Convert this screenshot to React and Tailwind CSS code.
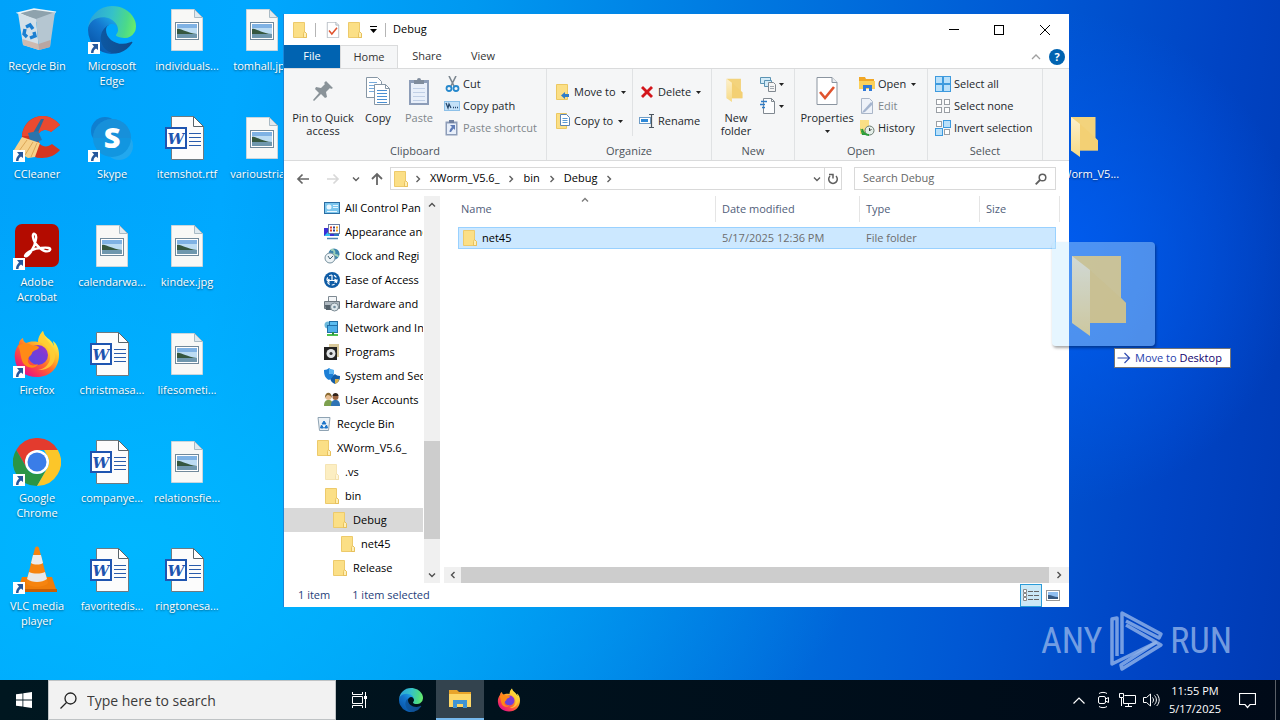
import { useState } from "react";

/* ---------- desktop icons ---------- */

function EdgeIcon({ className }) {
  return (
    <svg viewBox="4.6 4.9 256 256" className={className} aria-hidden="true">
      <defs>
        <linearGradient id="edge-a" x1="63" y1="180" x2="241" y2="180" gradientUnits="userSpaceOnUse">
          <stop offset="0" stopColor="#0c59a4" />
          <stop offset="1" stopColor="#114a8b" />
        </linearGradient>
        <linearGradient id="edge-b" x1="150" y1="100" x2="46" y2="215" gradientUnits="userSpaceOnUse">
          <stop offset="0" stopColor="#1b9de2" />
          <stop offset="0.4" stopColor="#1476ce" />
          <stop offset="1" stopColor="#0a5cb0" />
        </linearGradient>
        <linearGradient id="edge-c" x1="20" y1="60" x2="255" y2="110" gradientUnits="userSpaceOnUse">
          <stop offset="0" stopColor="#2ba6d8" />
          <stop offset="0.45" stopColor="#35c1c9" />
          <stop offset="0.8" stopColor="#4bd98a" />
          <stop offset="1" stopColor="#66eb6e" />
        </linearGradient>
      </defs>
      <path fill="url(#edge-a)" d="M235.7 195.5a93.7 93.7 0 0 1-10.6 4.7 101.9 101.9 0 0 1-35.9 6.4c-47.3 0-88.5-32.5-88.5-74.3a31.5 31.5 0 0 1 16.4-27.3c-42.8 1.8-53.8 46.4-53.8 72.5 0 73.9 68.1 81.4 82.8 81.4 7.9 0 19.8-2.3 27-4.6l1.3-.4a128.3 128.3 0 0 0 66.6-52.8 4 4 0 0 0-5.3-5.6Z" />
      <path fill="url(#edge-b)" d="M110.3 246.3A79.2 79.2 0 0 1 87.6 225a80.7 80.7 0 0 1 29.5-120c3.1-1.5 8.5-4.1 15.6-4a32.4 32.4 0 0 1 25.7 13 31.9 31.9 0 0 1 6.3 18.7c0-.2 24.5-79.6-80-79.6-43.9 0-80 41.6-80 78.2a130.2 130.2 0 0 0 12.1 56 128 128 0 0 0 156.4 67.1 75.6 75.6 0 0 1-62.9-8.1Z" />
      <path fill="url(#edge-c)" d="M156.9 153.8c-.8 1-3.3 2.5-3.3 5.6 0 2.6 1.7 5.1 4.8 7.3 14.3 10 41.4 8.6 41.5 8.6a59.6 59.6 0 0 0 30.3-8.3 61.4 61.4 0 0 0 30.4-52.9c.3-22.4-8-37.3-11.3-43.9C228.1 28.8 182.4 4.9 132.6 4.9a128 128 0 0 0-128 126.2c.5-36.5 36.8-66 80-66 3.5 0 23.5.3 42 10 16.3 8.6 24.9 19 30.8 29.2 6.2 10.7 7.3 24.2 7.3 29.5s-2.7 13.4-7.8 20Z" />
    </svg>
  );
}

function FirefoxIcon({ className }) {
  return (
    <svg viewBox="0 0 48 48" className={className} aria-hidden="true">
      <defs>
        <linearGradient id="fx-a" x1="40" y1="5" x2="10" y2="42" gradientUnits="userSpaceOnUse">
          <stop offset="0.05" stopColor="#fff44f" />
          <stop offset="0.35" stopColor="#ffba2a" />
          <stop offset="0.6" stopColor="#ff6a2e" />
          <stop offset="0.85" stopColor="#f6315c" />
          <stop offset="1" stopColor="#e31587" />
        </linearGradient>
        <linearGradient id="fx-b" x1="17" y1="32" x2="33" y2="14" gradientUnits="userSpaceOnUse">
          <stop offset="0" stopColor="#5b48e0" />
          <stop offset="0.6" stopColor="#7c3ad6" />
          <stop offset="1" stopColor="#a832c4" />
        </linearGradient>
      </defs>
      <path fill="url(#fx-a)" d="M30 1c-4 4-5 8-5 11-6-1-9 0-12 1-2-1-3-3-3-5-4 2-4 5-4 6-3 4-5 9-4 15 1 11 10 18 22 18 13 0 22-9 22-22 0-6-2-11-6-14 0 2 1 3 1 5-3-8-10-8-11-15Z" />
      <path fill="#ffcf35" d="M30 1c-4 4-4 8-4 11 9 3 12 9 11 17-1 6-6 10-12 11 9 1 17-5 17-14 0-11-11-15-12-25Z" opacity="0.85" />
      <circle cx="25" cy="25" r="10" fill="url(#fx-b)" />
      <path fill="#ff8a16" d="M5 16c5-4 9-3 13-1 2 1 6 0 8 2 0 3-6 3-7 6 0 2-3 3-4 6-1 6 5 8 10 5-2 5-11 5-15-1C7 27 8 21 5 16Z" />
    </svg>
  );
}

function ChromeIcon() {
  return (
    <svg viewBox="0 0 48 48" className="size-12" aria-hidden="true">
      <path fill="#e33b2e" d="M3.2 12A24 24 0 0 1 44.8 12H24a12 12 0 0 0-10.4 6Z" />
      <path fill="#e33b2e" d="M3.2 12 13.6 30 24 24V12Z" />
      <path fill="#2a9546" d="M3.2 12a24 24 0 0 0 20.8 36l10.4-18a12 12 0 0 1-20.8 0Z" />
      <path fill="#fcc629" d="M44.8 12A24 24 0 0 1 24 48l10.4-18A12 12 0 0 0 34.4 18L31 12Z" />
      <circle cx="24" cy="24" r="12" fill="#fff" />
      <circle cx="24" cy="24" r="9.5" fill="#3a7de8" />
    </svg>
  );
}

function RecycleBinIcon() {
  return (
    <svg viewBox="0 0 48 48" className="size-12" aria-hidden="true">
      <path d="M5 7 21 3l21 3-4 6-15 3Z" fill="#8ea2ad" stroke="#eef5f8" strokeWidth="1.5" />
      <path d="M5 7l18 6 3 31-16-5Z" fill="#d3e0e8" />
      <path d="M23 13l19-7-5 35-11 3Z" fill="#b5c6d1" />
      <path d="M9.500 33l16 5 .5 6-16-5Z" fill="#cdbab0" />
      <path d="M25.500 38l12-4-.5 7-11 3Z" fill="#b9a6a2" />
      <path d="M13 21l4-2 3 4M21 26l1 4-5 2M14 31l-3-3 1-5" fill="none" stroke="#1b7fd1" strokeWidth="3.400" />
    </svg>
  );
}

function CCleanerIcon() {
  return (
    <svg viewBox="0 0 48 48" className="size-12" aria-hidden="true">
      <path d="M47 11 38 18c-5-4-13-2-13 6s8 11 14 6l8 6c-4 5-11 8-18 8C16 44 9 36 9 24S17 2 30 2c7 0 13 4 17 9Z" fill="#d5351f" />
      <path d="M47 11 38 18c-5-4-12-2-13 4L9 22C10 10 19 2 30 2c7 0 13 4 17 9Z" fill="#ea4a30" />
      <path d="M31 5 24 21l-4-2 8-14Z" fill="#2c699c" />
      <path d="M15 19l10-2 4 9-11 4Z" fill="#2b74ad" />
      <path d="M9 23l18 6-5 14-7 1-14-8Z" fill="#f6d18b" />
      <path d="M14 26 6 37M20 28l-8 13M24 29l-6 14" stroke="#dba757" strokeWidth="1" />
    </svg>
  );
}

function SkypeIcon() {
  return (
    <svg viewBox="0 0 48 48" className="size-12" aria-hidden="true">
      <circle cx="17" cy="17" r="14" fill="#0f7fd0" />
      <circle cx="31" cy="32" r="14" fill="#22a8ee" />
      <circle cx="24" cy="24" r="19" fill="#1296e0" />
      <path d="M5 24a19 19 0 0 1 38 0Z" fill="#1a8cd6" opacity="0.6" />
      <text x="24" y="34" textAnchor="middle" fontFamily="Open Sans, sans-serif" fontSize="29" fontWeight="800" fill="#fff">S</text>
    </svg>
  );
}

function AcrobatIcon() {
  return (
    <svg viewBox="0 0 48 48" className="size-12" aria-hidden="true">
      <rect x="2" y="2" width="44" height="43" rx="7" fill="#b30b00" />
      <path
        d="M12 34c3 2 10-9 11-17 1-6-4-7-3-2 1 8 11 16 16 14 4-3-2-4-8-3-6 0-15 4-16 8Z"
        fill="none"
        stroke="#fff"
        strokeWidth="2.4"
        strokeLinejoin="round"
      />
    </svg>
  );
}

function VlcIcon() {
  return (
    <svg viewBox="0 0 48 48" className="size-12" aria-hidden="true">
      <path d="M9 31h30l5 15H4Z" fill="#ef7d0a" />
      <path d="M4 43h40v3H4Z" fill="#c85f04" />
      <path d="M22 2c1-2 3-2 4 0l9 35c-4 5-18 5-22 0Z" fill="#f6840f" />
      <path d="M20 9h8l2 8c-3 2-9 2-12 0Z" fill="#ececec" />
      <path d="M16 26c5 2 11 2 16 0l2 7c-5 4-15 4-20 0Z" fill="#e8e8e8" />
    </svg>
  );
}

function ImageFileIcon() {
  return (
    <svg viewBox="0 0 48 48" className="size-12" aria-hidden="true">
      <path d="M8.5 3.5h23l8 8v33h-31Z" fill="#f8f8f6" stroke="#c9d6dd" />
      <path d="M31.5 3.5v8h8Z" fill="#dfe9ef" stroke="#a9bac4" />
      <rect x="12.5" y="16.5" width="23" height="17" fill="#fff" stroke="#71899b" />
      <rect x="14" y="18" width="20" height="14" fill="#bcdcf3" />
      <path d="M14 18h20v4H14Z" fill="#7fb2e4" />
      <path d="M14 23c4-1 9 4 20 5v1H14Z" fill="#35573f" />
      <path d="M14 28h20v4H14Z" fill="#6f97ad" />
    </svg>
  );
}

function WordFileIcon() {
  return (
    <svg viewBox="0 0 48 48" className="size-12" aria-hidden="true">
      <path d="M8.5 2.500h22l10 10v33h-32Z" fill="#fcfcfc" stroke="#6f7a80" />
      <path d="M30.5 2.500v10h10Z" fill="#fff" stroke="#59646b" />
      <path d="M26 19.500h12M26 23.500h12M26 27.500h12M26 31.500h12" stroke="#2a5cab" strokeWidth="1.2" />
      <rect x="2" y="13" width="22" height="22" fill="#1f55b0" />
      <rect x="4" y="15" width="18" height="18" fill="#fff" />
      <text x="13" y="30" textAnchor="middle" fontFamily="DejaVu Serif, serif" fontSize="15" fontWeight="700" fontStyle="italic" fill="#1f55b0">W</text>
    </svg>
  );
}

function OpenFolderIcon({ className }) {
  return (
    <svg viewBox="0 0 96 96" className={className} aria-hidden="true">
      <defs>
        <linearGradient id="folder-front" x1="0" y1="0" x2="0" y2="1">
          <stop offset="0" stopColor="#fdf0cb" />
          <stop offset="1" stopColor="#f7da85" />
        </linearGradient>
      </defs>
      <path d="M16 6h49v42l5 5v20H16Z" fill="#f3d37c" />
      <path d="M65 48l5 5v20H34V20Z" fill="#f2cf70" opacity="0.7" />
      <path d="M16 6l18 14v66L16 73Z" fill="url(#folder-front)" />
    </svg>
  );
}

function ShortcutBadge() {
  return (
    <svg viewBox="0 0 12 12" className="absolute bottom-0 left-0 size-3" aria-hidden="true">
      <rect width="12" height="12" fill="#fff" />
      <path d="M4 2h6v6L8 6.500C6 8 5.500 9 5.500 11H3C3 8 4 6.500 6 4.500Z" fill="#27589c" />
    </svg>
  );
}

const DESKTOP_ITEMS = [
  { label: "Recycle Bin", icon: <RecycleBinIcon /> },
  { label: "CCleaner", icon: <CCleanerIcon />, shortcut: true },
  { label: "Adobe Acrobat", icon: <AcrobatIcon />, shortcut: true },
  { label: "Firefox", icon: <FirefoxIcon className="size-12" />, shortcut: true },
  { label: "Google Chrome", icon: <ChromeIcon />, shortcut: true },
  { label: "VLC media player", icon: <VlcIcon />, shortcut: true },
  { label: "Microsoft Edge", icon: <EdgeIcon className="size-12" />, shortcut: true },
  { label: "Skype", icon: <SkypeIcon />, shortcut: true },
  { label: "calendarwa...", icon: <ImageFileIcon /> },
  { label: "christmasa...", icon: <WordFileIcon /> },
  { label: "companye...", icon: <WordFileIcon /> },
  { label: "favoritedis...", icon: <WordFileIcon /> },
  { label: "individuals...", icon: <ImageFileIcon /> },
  { label: "itemshot.rtf", icon: <WordFileIcon /> },
  { label: "kindex.jpg", icon: <ImageFileIcon /> },
  { label: "lifesometi...", icon: <ImageFileIcon /> },
  { label: "relationsfie...", icon: <ImageFileIcon /> },
  { label: "ringtonesa...", icon: <WordFileIcon /> },
  { label: "tomhall.jpg", icon: <ImageFileIcon /> },
  { label: "varioustria...", icon: <ImageFileIcon /> },
  { label: "XWorm_V5...", icon: <OpenFolderIcon className="size-12" />, place: "col-start-15 row-start-2" },
];

function DesktopItem({ label, icon, shortcut, place }) {
  return (
    <button type="button" className={`flex flex-col items-center gap-1 pt-1.5 pr-[3px] pl-0.5 ${place ?? ""}`}>
      <span className="relative">
        {icon}
        {shortcut && <ShortcutBadge />}
      </span>
      <span className="text-center leading-[15px] text-white [text-shadow:0_1px_2px_rgba(0,0,0,0.5)]">{label}</span>
    </button>
  );
}

/* ---------- small explorer icons ---------- */

function Folder({ className = "" }) {
  return (
    <svg viewBox="0 0 14 16" className={`h-4 w-3.5 shrink-0 ${className}`} aria-hidden="true">
      <path d="M.5.5h11v9l2 2v4H.5Z" fill="#fbdf86" stroke="#edca6b" />
      <path d="M11.500 9.500l-1 2v4h3v-4Z" fill="#ffefb5" stroke="#e3b94e" strokeWidth="0.8" />
    </svg>
  );
}

function Caret() {
  return (
    <svg viewBox="0 0 5 3" className="h-[3px] w-[5px] shrink-0" aria-hidden="true">
      <path d="M0 0h5L2.500 3Z" fill="#222" />
    </svg>
  );
}

function Chevron({ className = "" }) {
  return (
    <svg viewBox="0 0 8 8" className={`size-2 shrink-0 ${className}`} aria-hidden="true">
      <path d="M2.500 1 5.500 4l-3 3" fill="none" stroke="currentColor" strokeWidth="1.4" />
    </svg>
  );
}

function TickPage({ className }) {
  return (
    <svg viewBox="0 0 22 28" className={className} aria-hidden="true">
      <path d="M1 .5h15l5 5v22H1Z" fill="#fff" stroke="#8b95a0" />
      <path d="M16 .5v5h5" fill="#e9edf1" stroke="#8b95a0" />
      <path d="m4 15 5 6L18 10" fill="none" stroke="#e0532e" strokeWidth="2.6" />
    </svg>
  );
}

function PinIcon() {
  return (
    <svg viewBox="0 0 22 28" className="h-7 w-[22px]" aria-hidden="true">
      <path d="M14 4l7 7-2 1-1-1-4 4 1 5-2 1-4-4-7 7-1-1 6-7-4-4 1-2 5 1 4-4-1-1Z" fill="#8a9399" />
    </svg>
  );
}

function CopyIcon() {
  return (
    <svg viewBox="0 0 26 28" className="h-7 w-[26px]" aria-hidden="true">
      <path d="M1.5.5h11l4 4v16h-15Z" fill="#fff" stroke="#8696a5" />
      <path d="M4 5.500h8M4 8.500h10M4 11.500h10M4 14.500h10" stroke="#77aadb" />
      <path d="M9.500 7.500h11l4 4v16h-15Z" fill="#fff" stroke="#8696a5" />
      <path d="M20.500 7.500v4h4" fill="none" stroke="#8696a5" />
      <path d="M12 13.500h10M12 16.500h10M12 19.500h10M12 22.500h10M12 25.500h10" stroke="#4a8fd2" />
    </svg>
  );
}

function PasteIcon() {
  return (
    <svg viewBox="0 0 22 28" className="h-7 w-[22px]" aria-hidden="true">
      <path d="M1 3h20v25H1Z" fill="#8d9db8" />
      <path d="M3 6h16v20H3Z" fill="#e8effa" />
      <path d="M5 11.500h12M5 15.500h12M5 19.500h12M5 23.500h12" stroke="#c0cfe6" />
      <path d="M6 3h3a2 2 0 0 1 4 0h3v4H6Z" fill="#7f8c9d" />
    </svg>
  );
}

function CutIcon() {
  return (
    <svg viewBox="0 0 16 16" className="size-4" aria-hidden="true">
      <path d="M5 0l5 10M12 0 7 10" stroke="#7c8790" strokeWidth="1.6" />
      <circle cx="5" cy="12.500" r="2.500" fill="none" stroke="#2688cc" strokeWidth="1.8" />
      <circle cx="12" cy="12.500" r="2.500" fill="none" stroke="#2688cc" strokeWidth="1.8" />
    </svg>
  );
}

function CopyPathIcon() {
  return (
    <svg viewBox="0 0 16 16" className="size-4" aria-hidden="true">
      <rect x="0.5" y="3.500" width="15" height="9" fill="#c4e1f8" stroke="#8cc0e8" />
      <path d="M2 5l2 5 1-4 2 4" fill="none" stroke="#24466b" strokeWidth="1.2" />
      <path d="M9 9.500h1M11 9.500h1M13 9.500h1" stroke="#24466b" strokeWidth="1.4" />
    </svg>
  );
}

function PasteShortcutIcon() {
  return (
    <svg viewBox="0 0 16 16" className="size-4" aria-hidden="true">
      <path d="M1.500 1.500h12v14h-12Z" fill="#8d9db8" />
      <path d="M3 3.500h9v10.500H3Z" fill="#e8effa" />
      <path d="M5 0h5v3H5Z" fill="#6f80a0" />
      <path d="M6 5h5v5L9.500 8.500 7 12H5.500c0-2 1-4 2.500-5Z" fill="#5f7cb6" />
    </svg>
  );
}

function MoveToIcon() {
  return (
    <svg viewBox="0 0 14 16" className="h-4 w-3.5" aria-hidden="true">
      <path d="M.5.5h11v15H.5Z" fill="#fbdf86" stroke="#ecc862" />
      <path d="M5 11.500 9 8v2h4v3H9v2Z" fill="#2f7dc8" />
    </svg>
  );
}

function CopyToIcon() {
  return (
    <svg viewBox="0 0 14 16" className="h-4 w-3.5" aria-hidden="true">
      <path d="M.5.5h10v15H.5Z" fill="#fbdf86" stroke="#ecc862" />
      <path d="M4.500 1.500h6l3 3v8h-9Z" fill="#fff" stroke="#5b84b5" />
      <path d="M6.500 5.500h5M6.500 7.500h5M6.500 9.500h5" stroke="#5b9bd5" />
    </svg>
  );
}

function DeleteIcon() {
  return (
    <svg viewBox="0 0 14 14" className="size-3.5" aria-hidden="true">
      <path d="M1 3 3 1l4 4 4-4 2 2-4 4 4 4-2 2-4-4-4 4-2-2 4-4Z" fill="#d3161c" />
    </svg>
  );
}

function RenameIcon() {
  return (
    <svg viewBox="0 0 16 16" className="size-4" aria-hidden="true">
      <rect x="0.5" y="4.500" width="11" height="6" fill="#fff" stroke="#6f9cc6" />
      <rect x="2" y="6" width="7" height="3" fill="#2f8ad8" />
      <path d="M10 1.500h5M10 14.500h5M12.500 2v12" stroke="#4b5660" strokeWidth="1.2" />
    </svg>
  );
}

function NewItemIcon() {
  return (
    <svg viewBox="0 0 16 16" className="size-4" aria-hidden="true">
      <path d="M.5 1.500h10v6H.5Z" fill="#d3ebf8" stroke="#5b93b3" />
      <path d="M4.500 4.500h7v6h-7Z" fill="#d3ebf8" stroke="#5b93b3" />
      <path d="M8.500 6.500h5l2 2v7h-7Z" fill="#f5f5f5" stroke="#808890" />
      <path d="M10 10.500h4M10 12.500h4" stroke="#a0a8b0" />
    </svg>
  );
}

function EasyAccessIcon() {
  return (
    <svg viewBox="0 0 16 16" className="size-4" aria-hidden="true">
      <path d="M3.500.5h8l3 3v12h-11Z" fill="#fcfdfe" stroke="#808890" />
      <path d="M11.500.5v3h3" fill="none" stroke="#808890" />
      <path d="M1 3.500h6M0 6.500h5M2 9.500h3" stroke="#2f7dc8" strokeWidth="1.4" />
    </svg>
  );
}

function OpenIcon() {
  return (
    <svg viewBox="0 0 16 16" className="size-4" aria-hidden="true">
      <path d="M0 1h6l1 2h8v10H0Z" fill="#f1a726" />
      <path d="M0 5h16v8H0Z" fill="#fbd15b" />
      <path d="M4 15V9h9v6h-3v-3H7v3Z" fill="#3079d8" />
    </svg>
  );
}

function EditIcon() {
  return (
    <svg viewBox="0 0 16 16" className="size-4" aria-hidden="true">
      <path d="M2.500.5h8l3 3v12h-11Z" fill="#eef2f9" stroke="#aab6c8" />
      <path d="M4 13 12 4l2 2-8 8-3 1Z" fill="#a5b5cf" />
    </svg>
  );
}

function HistoryIcon() {
  return (
    <svg viewBox="0 0 16 16" className="size-4" aria-hidden="true">
      <path d="M1 0h9v14H1Z" fill="#fbdf86" />
      <circle cx="10.500" cy="10.500" r="4.500" fill="#e4eee8" stroke="#6a7a70" />
      <path d="M10.500 8v3l2-2" fill="none" stroke="#444" />
      <path d="M1 8l3 5 4 2H3Z" fill="#2b9d3a" />
      <path d="M3 9c1 4 3 6 7 6" fill="none" stroke="#2b9d3a" strokeWidth="2" />
    </svg>
  );
}

const SQUARES = [
  [0.5, 0.5],
  [8.5, 0.5],
  [0.5, 8.5],
  [8.5, 8.5],
];

function SelectIcon({ on }) {
  return (
    <svg viewBox="0 0 16 16" className="size-4" aria-hidden="true">
      {SQUARES.map(([x, y], i) =>
        on[i] ? (
          <rect key={i} x={x} y={y} width="7" height="7" fill="#b9e0fa" stroke="#3d9ade" />
        ) : (
          <rect key={i} x={x + 1} y={y + 1} width="5" height="5" fill="#fff" stroke="#9a9fa5" />
        )
      )}
    </svg>
  );
}

/* ---------- navigation pane icons ---------- */

function PanelIcon() {
  return (
    <svg viewBox="0 0 16 16" className="size-4" aria-hidden="true">
      <rect x="0.5" y="2.500" width="15" height="11" fill="#7cc6ee" stroke="#2b6ea3" />
      <circle cx="5" cy="7" r="2.500" fill="#eaf7ff" />
      <path d="M9 5.500h5M9 7.500h5M3 11.500h10" stroke="#e9f6ff" />
    </svg>
  );
}

function AppearanceIcon() {
  return (
    <svg viewBox="0 0 16 16" className="size-4" aria-hidden="true">
      <path d="M0 4h10v8H0Z" fill="#3b2fd6" />
      <path d="M0 12 6 6v6Z" fill="#35c2ef" />
      <rect x="4.500" y="0.5" width="11" height="9" fill="#fff" stroke="#6c7da0" />
      <path d="M6 3.500h2M6 6.500h2" stroke="#e0402a" strokeWidth="2" />
      <path d="M9 3.500h2M9 6.500h2" stroke="#333d8c" strokeWidth="2" />
      <path d="M12 3.500h2M12 6.500h2" stroke="#f0a323" strokeWidth="2" />
      <path d="M3 14.500h11" stroke="#4f83b5" strokeWidth="1.500" />
      <path d="M10 10h5v2h-5Z" fill="#2c76c2" />
    </svg>
  );
}

function ClockIcon() {
  return (
    <svg viewBox="0 0 16 16" className="size-4" aria-hidden="true">
      <circle cx="10" cy="6" r="5.500" fill="#3d85ad" />
      <path d="M7 2c3-1 4 2 3 4s4 0 4 3" stroke="#9dd0b8" strokeWidth="2" fill="none" />
      <circle cx="6" cy="10" r="5" fill="#edf3f6" stroke="#76909e" />
      <path d="M4 8l2 3 3-3" fill="none" stroke="#44606f" />
    </svg>
  );
}

function EaseIcon() {
  return (
    <svg viewBox="0 0 16 16" className="size-4" aria-hidden="true">
      <circle cx="8" cy="8" r="8" fill="#0f5ca5" />
      <circle cx="8" cy="8" r="5" fill="none" stroke="#fff" strokeDasharray="3 2" strokeWidth="1.2" />
      <path d="M8 3v6M4 8.500h8M10.500 7 12.500 8.500l-2 2M5.500 7l-2 1.500 2 2" fill="none" stroke="#fff" strokeWidth="1.2" />
    </svg>
  );
}

function HardwareIcon() {
  return (
    <svg viewBox="0 0 16 16" className="size-4" aria-hidden="true">
      <path d="M4.500.5h8v6h-8Z" fill="#f4f6f8" stroke="#7f8a93" />
      <path d="M.5 5.500h15v7H.5Z" fill="#aeb8c0" stroke="#6d7880" />
      <path d="M1 9h6v5H2Z" fill="#53606a" />
      <circle cx="10.500" cy="11" r="4" fill="#dfe8ec" stroke="#7a8992" />
      <circle cx="10.500" cy="11" r="1.300" fill="#708b9b" />
    </svg>
  );
}

function NetworkIcon() {
  return (
    <svg viewBox="0 0 16 16" className="size-4" aria-hidden="true">
      <circle cx="4" cy="5" r="3.500" fill="#6cb9dc" />
      <rect x="5.500" y="1.500" width="8" height="6" fill="#5bbcf0" stroke="#216fa6" />
      <rect x="3.500" y="5.500" width="10" height="7" fill="#4fb0ea" stroke="#216fa6" />
      <path d="M3 14h11v2H3Z" fill="#4fc04c" />
      <path d="M8 12h2v3H8Z" fill="#2f8f4a" />
    </svg>
  );
}

function ProgramsIcon() {
  return (
    <svg viewBox="0 0 16 16" className="size-4" aria-hidden="true">
      <path d="M5 0h10v13H5Z" fill="#d9c99b" />
      <path d="M0 3h13v13H0Z" fill="#222" />
      <circle cx="7" cy="9.500" r="4.500" fill="#e1e4e6" />
      <circle cx="7" cy="9.500" r="1.600" fill="#333" />
    </svg>
  );
}

function SecurityIcon() {
  return (
    <svg viewBox="0 0 16 16" className="size-4" aria-hidden="true">
      <path d="M6 8c2 0 4-1 5-2 1 1 3 2 5 2 0 4-1 6-5 8-4-2-5-4-5-8Z" fill="#145da6" />
      <path d="M0 2c2 0 4-1 5-2 1 1 3 2 5 2 0 5-1 8-5 10C1 10 0 7 0 2Z" fill="#1d7fd6" />
      <path d="M5 0c1 1 3 2 5 2 0 2 0 3-.5 4H5Z" fill="#5eb7f3" />
      <path d="M11 11h4c0 3-2 4-4 5Z" fill="#d8b04a" />
    </svg>
  );
}

function UsersIcon() {
  return (
    <svg viewBox="0 0 16 16" className="size-4" aria-hidden="true">
      <path d="M0 14c0-5 2-6 4.500-6S9 9 9 14Z" fill="#7da04e" />
      <path d="M7 14c0-5 2-6 4.500-6S16 9 16 14Z" fill="#2f74b5" />
      <circle cx="4.500" cy="5" r="3" fill="#e7bd92" />
      <path d="M1 7c-1-8 7-8 7-1-1-2-3-3-4-3S1 5 1 7Z" fill="#8c6c33" />
      <circle cx="11.500" cy="5" r="3" fill="#9b6440" />
      <path d="M8.500 4c0-4 6-4 6 0Z" fill="#33241b" />
    </svg>
  );
}

function SmallBinIcon() {
  return (
    <svg viewBox="0 0 14 16" className="h-4 w-3.5" aria-hidden="true">
      <path d="M1 1.500h12l-1.500 13h-9Z" fill="#eaf1f6" stroke="#8fa3b3" />
      <path d="m7 5 2 3h-4ZM3.500 12l1-3 2 3ZM10.500 12l-1-3-2 3Z" fill="#1b75c9" stroke="#1b75c9" />
    </svg>
  );
}

const TREE = [
  { label: "All Control Pan", pad: "pl-10", icon: <PanelIcon /> },
  { label: "Appearance and", pad: "pl-10", icon: <AppearanceIcon /> },
  { label: "Clock and Regi", pad: "pl-10", icon: <ClockIcon /> },
  { label: "Ease of Access", pad: "pl-10", icon: <EaseIcon /> },
  { label: "Hardware and", pad: "pl-10", icon: <HardwareIcon /> },
  { label: "Network and In", pad: "pl-10", icon: <NetworkIcon /> },
  { label: "Programs", pad: "pl-10", icon: <ProgramsIcon /> },
  { label: "System and Sec", pad: "pl-10", icon: <SecurityIcon /> },
  { label: "User Accounts", pad: "pl-10", icon: <UsersIcon /> },
  { label: "Recycle Bin", pad: "pl-8", icon: <SmallBinIcon /> },
  { label: "XWorm_V5.6_", pad: "pl-8", icon: <Folder /> },
  { label: ".vs", pad: "pl-10", icon: <Folder className="opacity-50" /> },
  { label: "bin", pad: "pl-10", icon: <Folder /> },
  { label: "Debug", pad: "pl-12", icon: <Folder /> },
  { label: "net45", pad: "pl-14", icon: <Folder /> },
  { label: "Release", pad: "pl-12", icon: <Folder /> },
];

/* ---------- ribbon ---------- */

function RibbonGroup({ label, className, children }) {
  return (
    <section className={`flex flex-col border-r border-[#e0e2e4] ${className}`} aria-label={label}>
      <div className="flex flex-1 items-start">{children}</div>
      <div className="pb-px text-center leading-4 text-[#4c535a]">{label}</div>
    </section>
  );
}

function BigButton({ icon, label, className, muted, caret }) {
  return (
    <button type="button" className={`flex flex-col items-center gap-1.5 pt-2 leading-[13px] ${muted ? "text-[#80868c]" : "text-[#23272b]"} ${className}`}>
      {icon}
      <span className="text-center">{label}</span>
      {caret && <Caret />}
    </button>
  );
}

function SmallButton({ icon, label, muted, caret }) {
  return (
    <button type="button" className={`flex h-[22px] items-center gap-[3px] whitespace-nowrap ${muted ? "text-[#80868c]" : "text-[#23272b]"}`}>
      <span className="flex w-4 shrink-0 justify-center">{icon}</span>
      {label}
      {caret && <span className="ml-0.5"><Caret /></span>}
    </button>
  );
}

function Ribbon() {
  return (
    <div className="flex h-[93px] border-y border-[#dadbdc] bg-[#f5f6f7]">
      <RibbonGroup label="Clipboard" className="w-[263px]">
        <BigButton icon={<PinIcon />} label={<>Pin to Quick<br />access</>} className="w-[78px]" />
        <BigButton icon={<CopyIcon />} label="Copy" className="w-8" />
        <BigButton icon={<PasteIcon />} label="Paste" muted className="w-[50px]" />
        <div className="flex flex-col pt-1">
          <SmallButton icon={<CutIcon />} label="Cut" />
          <SmallButton icon={<CopyPathIcon />} label="Copy path" />
          <SmallButton icon={<PasteShortcutIcon />} label="Paste shortcut" muted />
        </div>
      </RibbonGroup>
      <RibbonGroup label="Organize" className="w-[165px]">
        <div className="flex w-[86px] flex-col gap-[7px] border-r border-[#e0e2e4] pt-3 pb-1 pl-2">
          <SmallButton icon={<MoveToIcon />} label="Move to" caret />
          <SmallButton icon={<CopyToIcon />} label="Copy to" caret />
        </div>
        <div className="flex flex-col gap-[7px] pt-3 pl-1.5">
          <SmallButton icon={<DeleteIcon />} label="Delete" caret />
          <SmallButton icon={<RenameIcon />} label="Rename" />
        </div>
      </RibbonGroup>
      <RibbonGroup label="New" className="w-[83px]">
        <BigButton icon={<OpenFolderIcon className="size-7" />} label={<>New<br />folder</>} className="w-12" />
        <div className="flex flex-col pt-1">
          <button type="button" className="flex h-[22px] items-center gap-[3px]" aria-label="New item"><NewItemIcon /><Caret /></button>
          <button type="button" className="flex h-[22px] items-center gap-[3px]" aria-label="Easy access"><EasyAccessIcon /><Caret /></button>
        </div>
      </RibbonGroup>
      <RibbonGroup label="Open" className="w-[133px]">
        <BigButton icon={<TickPage className="h-7 w-[22px]" />} label="Properties" caret className="w-16" />
        <div className="flex flex-col pt-1">
          <SmallButton icon={<OpenIcon />} label="Open" caret />
          <SmallButton icon={<EditIcon />} label="Edit" muted />
          <SmallButton icon={<HistoryIcon />} label="History" />
        </div>
      </RibbonGroup>
      <RibbonGroup label="Select" className="w-[115px]">
        <div className="flex flex-col pt-1 pl-[7px]">
          <SmallButton icon={<SelectIcon on={[1, 1, 1, 1]} />} label="Select all" />
          <SmallButton icon={<SelectIcon on={[0, 0, 0, 0]} />} label="Select none" />
          <SmallButton icon={<SelectIcon on={[0, 1, 1, 0]} />} label="Invert selection" />
        </div>
      </RibbonGroup>
    </div>
  );
}

/* ---------- explorer window ---------- */

function TitleBar() {
  return (
    <header className="flex h-[31px] items-center bg-white pl-[9px] text-black">
      <Folder />
      <span className="ml-2 h-3.5 w-px bg-[#b5b5b5]" />
      <button type="button" className="ml-2.5" aria-label="Properties"><TickPage className="h-4 w-3.5" /></button>
      <button type="button" className="ml-2" aria-label="New folder"><Folder /></button>
      <button type="button" className="ml-[7px] flex w-2 flex-col items-center gap-0.5" aria-label="Customize Quick Access Toolbar">
        <span className="h-px w-[7px] bg-black" />
        <svg viewBox="0 0 7 4" className="h-1 w-[7px]" aria-hidden="true"><path d="M0 0h7L3.500 4Z" /></svg>
      </button>
      <span className="ml-2 h-3.5 w-px bg-[#b5b5b5]" />
      <h1 className="ml-[7px]">Debug</h1>
      <div className="ml-auto flex">
        <button type="button" className="flex h-[30px] w-[46px] items-center justify-center" aria-label="Minimize">
          <span className="h-px w-2.5 bg-black" />
        </button>
        <button type="button" className="flex h-[30px] w-11 items-center justify-center" aria-label="Maximize">
          <span className="size-2.5 border border-black" />
        </button>
        <button type="button" className="flex h-[30px] w-12 items-center justify-center" aria-label="Close">
          <svg viewBox="0 0 10 10" className="size-2.5" aria-hidden="true"><path d="m0 0 10 10M10 0 0 10" stroke="#000" /></svg>
        </button>
      </div>
    </header>
  );
}

function Tabs() {
  return (
    <nav className="flex h-[23px] items-stretch bg-white text-[#333]">
      <button type="button" className="w-14 bg-[#0063b1] text-white">File</button>
      <button type="button" className="-mb-px w-[58px] border border-b-0 border-[#dadbdc] bg-[#f5f6f7]">Home</button>
      <button type="button" className="w-[58px]">Share</button>
      <button type="button" className="w-[54px]">View</button>
      <div className="ml-auto flex items-center gap-2 pr-1">
        <button type="button" aria-label="Minimize the Ribbon">
          <svg viewBox="0 0 10 6" className="h-1.5 w-2.5" aria-hidden="true"><path d="m1 5 4-4 4 4" fill="none" stroke="#a0a0a0" strokeWidth="1.300" /></svg>
        </button>
        <button type="button" className="size-4 rounded-full bg-[#0063b1] leading-4 font-bold text-white" aria-label="Help">?</button>
      </div>
    </nav>
  );
}

function AddressBar() {
  return (
    <div className="flex h-[35px] items-center bg-white pr-[13px] pl-3 text-[#5f5f5f]">
      <button type="button" className="mr-4" aria-label="Back">
        <svg viewBox="0 0 14 12" className="h-3 w-3.5" aria-hidden="true"><path d="M13 6H2M6.500 1.500 2 6l4.500 4.500" fill="none" stroke="#666" strokeWidth="1.700" /></svg>
      </button>
      <button type="button" className="mr-3" aria-label="Forward" disabled>
        <svg viewBox="0 0 14 12" className="h-3 w-3.5" aria-hidden="true"><path d="M1 6h11M7.500 1.500 12 6l-4.500 4.500" fill="none" stroke="#d8d8d8" strokeWidth="1.700" /></svg>
      </button>
      <button type="button" className="mr-2.5" aria-label="Recent locations"><Chevron className="rotate-90" /></button>
      <button type="button" aria-label="Up">
        <svg viewBox="0 0 14 14" className="size-3.5" aria-hidden="true"><path d="M7 13V2M2 7l5-5 5 5" fill="none" stroke="#666" strokeWidth="1.800" /></svg>
      </button>
      <div className="ml-1.5 flex h-[23px] flex-1 items-center border border-[#d9d9d9] pl-[3px] text-black">
        <Folder />
        <Chevron className="mx-1.5 text-[#5f5f5f]" />
        <a href="#xworm" className="ml-0.5">XWorm_V5.6_</a>
        <Chevron className="mx-2 text-[#5f5f5f]" />
        <a href="#bin">bin</a>
        <Chevron className="mx-2 text-[#5f5f5f]" />
        <a href="#debug">Debug</a>
        <Chevron className="mx-2 text-[#5f5f5f]" />
        <button type="button" className="ml-auto flex h-full w-4 items-center justify-center border-r border-[#d9d9d9] text-[#5f5f5f]" aria-label="Previous locations">
          <Chevron className="rotate-90" />
        </button>
        <button type="button" className="flex h-full w-4 items-center justify-center" aria-label="Refresh">
          <svg viewBox="0 0 12 12" className="size-3" aria-hidden="true">
            <path d="M3 3a4.300 4.300 0 1 0 6 0M2 1.500h4v4" fill="none" stroke="#5f5f5f" strokeWidth="1.500" />
          </svg>
        </button>
      </div>
      <label className="ml-3 flex h-[23px] w-[202px] items-center border border-[#d9d9d9] px-2">
        <input type="text" placeholder="Search Debug" aria-label="Search Debug" className="w-0 flex-1 outline-none placeholder:text-[#666]" />
        <svg viewBox="0 0 12 12" className="size-3" aria-hidden="true">
          <circle cx="7.500" cy="4.500" r="3.300" fill="none" stroke="#5f5f5f" strokeWidth="1.500" />
          <path d="M5 7 .7 11.300" stroke="#5f5f5f" strokeWidth="1.800" />
        </svg>
      </label>
    </div>
  );
}

function NavPane({ current, onSelect }) {
  return (
    <aside className="flex w-[156px] shrink-0">
      <ul className="w-[139px] overflow-hidden">
        {TREE.map((node) => (
          <li key={node.label + node.pad}>
            <button
              type="button"
              onClick={() => onSelect(node.label)}
              className={`flex h-6 w-full items-center gap-[5px] whitespace-nowrap text-black ${node.pad} ${current === node.label ? "bg-[#d9d9d9]" : ""}`}
            >
              <span className="flex w-4 shrink-0 justify-center">{node.icon}</span>
              {node.label}
            </button>
          </li>
        ))}
      </ul>
      <div className="ml-px flex flex-1 flex-col items-center bg-[#f0f0f0] text-[#505050]">
        <span className="flex h-[17px] items-center"><Chevron className="-rotate-90" /></span>
        <span className="mt-auto h-[98px] w-full bg-[#cdcdcd]" />
        <span className="mt-[27px] flex h-[17px] items-center"><Chevron className="rotate-90" /></span>
      </div>
    </aside>
  );
}

function FileList() {
  return (
    <main className="flex min-w-0 flex-1 flex-col pl-1">
      <table className="ml-3.5 w-[602px] table-fixed border-separate border-spacing-0 text-left text-[#6d6d6d]">
        <thead>
          <tr className="h-[26px] text-[#51607a]">
            <th className="relative w-[258px] border-r border-[#e5e5e5] pl-[3px] font-normal">
              Name
              <Chevron className="absolute top-0 left-[123px] -rotate-90 text-[#7d7d7d]" />
            </th>
            <th className="w-36 border-r border-[#e5e5e5] pl-1.5 font-normal">Date modified</th>
            <th className="w-[120px] border-r border-[#e5e5e5] pl-1.5 font-normal">Type</th>
            <th className="w-[76px] pl-1.5 font-normal">Size</th>
            <td className="border-r border-[#e5e5e5]" />
          </tr>
        </thead>
        <tbody>
          <tr className="h-[5px]"><td colSpan="5" /></tr>
          <tr className="h-[22px]">
            <td className="border-y border-l border-[#99d1ff] bg-[#cce8ff] pl-1 text-black">
              <span className="flex items-center gap-[5px]"><Folder /> net45</span>
            </td>
            <td className="border-y border-[#99d1ff] bg-[#cce8ff] pl-1.5">5/17/2025 12:36 PM</td>
            <td className="border-y border-[#99d1ff] bg-[#cce8ff] pl-1.5">File folder</td>
            <td className="border-y border-r border-[#99d1ff] bg-[#cce8ff]" />
            <td />
          </tr>
        </tbody>
      </table>
      <div className="mt-auto flex h-4 items-center bg-[#f0f0f0] text-[#505050]">
        <span className="flex w-[17px] justify-center"><Chevron className="rotate-180" /></span>
        <span className="h-full flex-1 bg-[#cdcdcd]" />
        <span className="flex w-5 justify-center"><Chevron /></span>
      </div>
    </main>
  );
}

function StatusBar() {
  return (
    <footer className="flex h-6 items-center bg-white pr-[9px] pl-3.5 text-[#26407a]">
      <span>1 item</span>
      <span className="ml-[22px]">1 item selected</span>
      <button type="button" className="ml-auto flex h-[23px] w-[22px] items-center justify-center border border-[#2a9bd8] bg-[#cbe8f6]" aria-label="Details view">
        <svg viewBox="0 0 16 14" className="h-3.5 w-4" aria-hidden="true">
          <path d="M.5 1.500h3v3h-3zM.5 5.500h3v3h-3zM.5 9.500h3v3h-3z" fill="#fff" stroke="#8a8a8a" />
          <path d="M5 3.500h5M11 3.500h5M5 7.500h5M11 7.500h5M5 11.500h5M11 11.500h5" stroke="#666" />
        </svg>
      </button>
      <button type="button" className="ml-1" aria-label="Large icons view">
        <svg viewBox="0 0 14 11" className="h-[11px] w-3.5" aria-hidden="true">
          <rect x="0.5" y="0.5" width="13" height="10" fill="#fff" stroke="#999" />
          <rect x="2" y="2" width="10" height="7" fill="#8fbef0" />
          <path d="M2 5c4 0 6 2 10 2v2H2Z" fill="#35577f" />
        </svg>
      </button>
    </footer>
  );
}

function ExplorerWindow() {
  const [current, setCurrent] = useState("Debug");

  return (
    <section className="absolute top-3.5 left-[283px] flex h-[593px] w-[786px] flex-col border-l border-[#1a86d8] bg-white" aria-label="File Explorer">
      <TitleBar />
      <Tabs />
      <Ribbon />
      <AddressBar />
      <div className="flex min-h-0 flex-1">
        <NavPane current={current} onSelect={setCurrent} />
        <FileList />
      </div>
      <StatusBar />
    </section>
  );
}

/* ---------- things over the desktop ---------- */

function DragGhost() {
  return (
    <div className="absolute top-[242px] left-[1052px]">
      <div className="h-[104px] w-[103px] rounded-sm bg-[#c0e8ff]/40 pt-2 pl-1 shadow-[1px_2px_3px_rgba(0,0,0,0.35)]">
        <OpenFolderIcon className="size-24 opacity-75" />
      </div>
      <div className="absolute top-[106px] left-[62px] flex h-5 items-center gap-1 border border-[#767676] bg-white pr-2 pl-0.5 whitespace-nowrap text-[#1f3fae]">
        <svg viewBox="0 0 13 12" className="h-3 w-3.5" aria-hidden="true"><path d="M0 6h12M7 1l5 5-5 5" fill="none" stroke="#2f4bb0" strokeWidth="1.2" /></svg>
        <span>Move to <span className="text-[#12006e]">Desktop</span></span>
      </div>
    </div>
  );
}

function Watermark() {
  return (
    <div className="absolute right-12 bottom-2 flex items-center gap-1.5 font-['Roboto_Condensed','Liberation_Sans_Narrow','Roboto',sans-serif] text-[36px] text-[#92b4ea]/80">
      <span>ANY</span>
      <svg viewBox="0 0 56 62" className="h-[62px] w-14" fill="none" stroke="currentColor" strokeWidth="3.5" strokeLinejoin="round" aria-hidden="true">
        <path d="M14 44V3l39 21-2 4-33-17" />
        <path d="M9 46V8L4 9v45l45-22" />
        <path d="M18 15l35 20-39 24-1-4 34-22" />
      </svg>
      <span>RUN</span>
    </div>
  );
}

/* ---------- taskbar ---------- */

function Taskbar() {
  return (
    <footer className="flex h-10 items-stretch bg-linear-to-r from-[#001720] to-[#000a18] text-white">
      <button type="button" className="flex w-12 items-center justify-center" aria-label="Start">
        <svg viewBox="0 0 16 16" className="size-4" fill="#fff" aria-hidden="true">
          <path d="M0 2.300 6.500 1.400v6.200H0ZM7.300 1.300 16 0v7.600H7.300ZM0 8.400h6.500v6.200L0 13.700ZM7.300 8.400H16V16l-8.700-1.300Z" />
        </svg>
      </button>
      <label className="flex w-72 items-center gap-2.5 border border-[#bfc3c5] bg-[#f2f2f2] pl-[11px]">
        <svg viewBox="0 0 17 17" className="size-[17px]" aria-hidden="true">
          <circle cx="10.500" cy="6.500" r="5.500" fill="none" stroke="#222" strokeWidth="1.300" />
          <path d="M6.500 10.500.5 16.500" stroke="#222" strokeWidth="1.300" />
        </svg>
        <input type="text" placeholder="Type here to search" aria-label="Type here to search" className="w-0 flex-1 text-[14px] outline-none placeholder:text-[#3b3b3b]" />
      </label>
      <button type="button" className="flex w-12 items-center justify-center" aria-label="Task View">
        <svg viewBox="0 0 16 16" className="size-4" fill="none" stroke="#fff" aria-hidden="true">
          <path d="M.5 0v2.500h10V0M.5 16v-2.500h10V16M.5 4.500h10v7H.5ZM13.500 0v16" />
          <path d="M12 5.500h3" strokeWidth="3" />
        </svg>
      </button>
      <button type="button" className="flex w-[52px] items-center justify-center pl-0.5" aria-label="Microsoft Edge"><EdgeIcon className="size-6" /></button>
      <button type="button" className="flex w-12 items-center justify-center border-b-2 border-[#76b9ed] bg-[#33434e]" aria-label="File Explorer">
        <svg viewBox="0 0 24 20" className="h-5 w-6" aria-hidden="true">
          <path d="M1 1h8l2 2h12v6H1Z" fill="#e8a42a" />
          <path d="M1 5h22v13H1Z" fill="#fdd767" />
          <path d="M5 19v-8h14v8h-4v-4H9v4Z" fill="#3f95d6" />
        </svg>
      </button>
      <button type="button" className="flex w-[50px] items-center justify-center" aria-label="Firefox"><FirefoxIcon className="size-6" /></button>

      <div className="ml-auto flex items-center">
        <button type="button" className="flex w-6 justify-center" aria-label="Show hidden icons">
          <svg viewBox="0 0 12 7" className="h-[7px] w-3" aria-hidden="true"><path d="m.5 6.500 5.500-5.500 5.500 5.500" fill="none" stroke="#fff" strokeWidth="1.2" /></svg>
        </button>
        <button type="button" className="flex w-6 justify-center" aria-label="Meet Now">
          <svg viewBox="0 0 16 18" className="h-[18px] w-4" fill="none" stroke="#fff" aria-hidden="true">
            <rect x="3.500" y="5.500" width="7" height="7" rx="1.500" />
            <path d="m10.500 8 3-1.500v5l-3-1.500M4 2.500c2-1.500 6-1.500 8 0M4 15.500c2 1.500 6 1.500 8 0" />
          </svg>
        </button>
        <button type="button" className="flex w-6 justify-center" aria-label="Network">
          <svg viewBox="0 0 17 16" className="h-4 w-[17px]" fill="none" stroke="#fff" aria-hidden="true">
            <path d="M5.500 3.500h11v8H4.500V6M9.500 11.500v3M6 14.500h7" />
            <path d="M.5 1.500h4v4h-4ZM2.500 5.500v8.500" />
          </svg>
        </button>
        <button type="button" className="flex w-6 justify-center" aria-label="Volume">
          <svg viewBox="0 0 17 16" className="h-4 w-[17px]" fill="none" stroke="#fff" aria-hidden="true">
            <path d="M.5 5.500h3l4-3.500v12l-4-3.500h-3ZM9.500 5.500c1.300 1.500 1.300 3.500 0 5M11.500 3.500c2.500 2.500 2.500 6.500 0 9M13.700 2c3.300 3.500 3.300 8.500 0 12" />
          </svg>
        </button>
        <button type="button" className="w-16 text-center leading-[18px]">11:55 PM<br />5/17/2025</button>
        <button type="button" className="flex w-10 justify-center" aria-label="Notifications">
          <svg viewBox="0 0 17 17" className="size-[17px]" aria-hidden="true">
            <path d="M.5 1.500h16v11H11l-2.500 3-2.500-3H.5Z" fill="none" stroke="#fff" strokeWidth="1.2" />
          </svg>
        </button>
        <span className="ml-2 h-full w-[5px] border-l border-[#5a6068]" />
      </div>
    </footer>
  );
}

export default function App() {
  return (
    <div className="flex h-screen flex-col overflow-hidden font-['Open_Sans','Noto_Sans',sans-serif] text-[11px]">
      <div className="relative min-h-0 flex-1 overflow-hidden bg-[radial-gradient(circle_at_82%_38%,#005cf0_0%,#0055e000_22%),radial-gradient(ellipse_at_10%_80%,#00b6ff_0%,#00b6ff00_45%),linear-gradient(97deg,#00a2fa_0%,#00a8ff_18%,#0098f0_35%,#0078e0_55%,#0058d4_76%,#0044c4_90%,#003ab4_100%)]">
        <div className="grid auto-cols-[75px] grid-flow-col grid-rows-[repeat(6,108px)] justify-start">
          {DESKTOP_ITEMS.map((item) => (
            <DesktopItem key={item.label} {...item} />
          ))}
        </div>
        <Watermark />
        <ExplorerWindow />
        <DragGhost />
      </div>
      <Taskbar />
    </div>
  );
}
